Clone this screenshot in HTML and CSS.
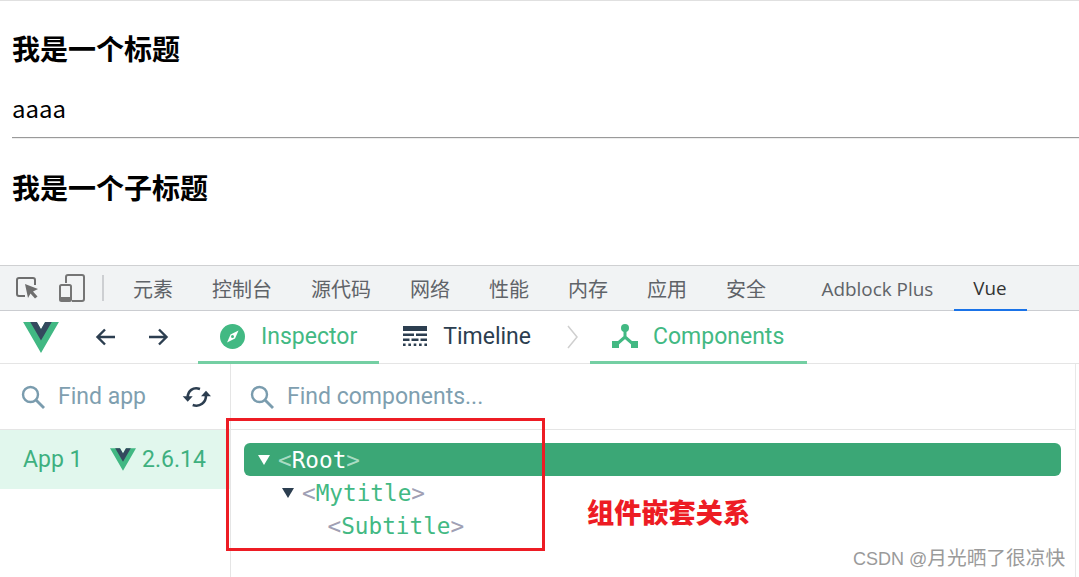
FILE: index.html
```html
<!DOCTYPE html>
<html lang="zh">
<head>
<meta charset="utf-8">
<title>Vue Devtools</title>
<link rel="stylesheet" href="styles.css">
</head>
<body>
<main class="page">
  <h1 class="title">我是一个标题</h1>
  <p class="text">aaaa</p>
  <hr class="rule">
  <h2 class="title sub">我是一个子标题</h2>
</main>
<nav class="dt-bar">
  <svg class="dt-icon inspect" width="24" height="24" viewBox="0 0 24 24"><path d="M9 20H3a2 2 0 0 1-2-2V4a2 2 0 0 1 2-2h14a2 2 0 0 1 2 2v5" fill="none" stroke="#6e6e6e" stroke-width="2"/><path d="M9 8l13 5-5 2.500 4.500 5-2.500 2-4.500-5L12 22z" fill="#6e6e6e"/></svg>
  <svg class="dt-icon device" width="28" height="28" viewBox="0 0 28 28"><path d="M8 9V3a2 2 0 0 1 2-2h14a2 2 0 0 1 2 2v22a2 2 0 0 1-2 2H14" fill="none" stroke="#757575" stroke-width="2"/><rect x="2" y="11" width="11" height="16" rx="1.500" fill="none" stroke="#757575" stroke-width="2"/><rect x="2" y="23" width="11" height="4" fill="#757575"/></svg>
  <span class="dt-sep"></span>
  <div class="dt-tabs">
    <span class="dt-tab">元素</span>
    <span class="dt-tab">控制台</span>
    <span class="dt-tab">源代码</span>
    <span class="dt-tab">网络</span>
    <span class="dt-tab">性能</span>
    <span class="dt-tab">内存</span>
    <span class="dt-tab">应用</span>
    <span class="dt-tab">安全</span>
    <span class="dt-tab ext">Adblock Plus</span>
    <span class="dt-tab vue">Vue</span>
  </div>
</nav>
<header class="vue-bar">
  <svg class="logo" width="36" height="31" viewBox="0 0 261.76 226.69"><path d="M161.096.001l-30.225 52.351L100.647.001H-.005l130.877 226.688L261.749.001z" fill="#41b883"/><path d="M161.096.001l-30.225 52.351L100.647.001H52.346l78.526 136.01L209.398.001z" fill="#34495e"/></svg>
  <svg class="arrow back" width="22" height="22" viewBox="0 0 22 22"><path d="M20 11H3M10 3.500L2.500 11l7.500 7.500" fill="none" stroke="#2c3e50" stroke-width="2.400"/></svg>
  <svg class="arrow fwd" width="22" height="22" viewBox="0 0 22 22"><path d="M1 11h17M11 3.500l7.500 7.500-7.500 7.500" fill="none" stroke="#2c3e50" stroke-width="2.400"/></svg>
  <div class="vue-tab active inspector">
    <svg width="25" height="25" viewBox="0 0 25 25"><circle cx="12.500" cy="12.500" r="12.500" fill="#42b983"/><path d="M18.500 6.500l-8 4-3.500 8 8-4z" fill="#fff"/><circle cx="12.500" cy="12.500" r="1.500" fill="#42b983"/></svg>
    <span>Inspector</span>
  </div>
  <div class="vue-tab timeline">
    <svg width="24" height="20" viewBox="0 0 24 20"><rect x="0" y="0" width="24" height="5" fill="#2c3e50"/><path d="M0 8.700h11M13 8.700h11M0 13.700h6.500M8.500 13.700h7M17.500 13.700h6.500" stroke="#2c3e50" stroke-width="2.400"/><path d="M0 18.700h24" stroke="#2c3e50" stroke-width="2.400" stroke-dasharray="2.600 2.750"/></svg>
    <span>Timeline</span>
  </div>
  <svg class="chev" width="11" height="24" viewBox="0 0 11 24"><path d="M1 1l9 11-9 11" fill="none" stroke="#cfcfcf" stroke-width="1.500"/></svg>
  <div class="vue-tab active components">
    <svg width="26" height="24" viewBox="0 0 26 24"><circle cx="13" cy="4" r="4" fill="#42b983"/><path d="M13 6v8M13 13L5 20M13 13l8 7" stroke="#42b983" stroke-width="3" fill="none"/><rect x="0" y="17" width="7" height="7" fill="#42b983"/><rect x="19" y="17" width="7" height="7" fill="#42b983"/></svg>
    <span>Components</span>
  </div>
</header>
<section class="panes">
  <aside class="apps">
    <div class="search">
      <svg class="glass" width="24" height="24" viewBox="0 0 24 24"><circle cx="9.500" cy="9.500" r="7.500" fill="none" stroke="#7a9cae" stroke-width="2.400"/><path d="M15 15l8 8" stroke="#7a9cae" stroke-width="2.800"/></svg>
      <span class="hint">Find app</span>
      <svg class="sync" width="30" height="22" viewBox="-1 0 30 22"><path d="M17 3C10 .5 4.700 5 4.700 11.500M9.700 19C17 21.500 23 16.500 23 9.500" fill="none" stroke="#2c3e50" stroke-width="2.600"/><path d="M-.3 10.300h10l-5 5.500zM18 10.300h10l-5-5.500z" fill="#2c3e50"/></svg>
    </div>
    <div class="app-row">
      <span class="app-name">App 1</span>
      <svg width="26" height="23" viewBox="0 0 261.76 226.69"><path d="M161.096.001l-30.225 52.351L100.647.001H-.005l130.877 226.688L261.749.001z" fill="#41b883"/><path d="M161.096.001l-30.225 52.351L100.647.001H52.346l78.526 136.01L209.398.001z" fill="#34495e"/></svg>
      <span class="app-ver">2.6.14</span>
    </div>
  </aside>
  <div class="tree-pane">
    <div class="search wide">
      <svg class="glass" width="24" height="24" viewBox="0 0 24 24"><circle cx="9.500" cy="9.500" r="7.500" fill="none" stroke="#7a9cae" stroke-width="2.400"/><path d="M15 15l8 8" stroke="#7a9cae" stroke-width="2.800"/></svg>
      <span class="hint">Find components...</span>
    </div>
    <ul class="tree">
      <li class="node selected"><i class="tri"></i><span class="br">&lt;</span><span class="nm">Root</span><span class="br">&gt;</span></li>
      <li class="node d1"><i class="tri"></i><span class="br">&lt;</span><span class="nm">Mytitle</span><span class="br">&gt;</span></li>
      <li class="node d2"><span class="br">&lt;</span><span class="nm">Subtitle</span><span class="br">&gt;</span></li>
    </ul>
  </div>
</section>
<div class="redbox"></div>
<div class="note">组件嵌套关系</div>
<div class="mark">CSDN @<span class="mark-cjk">月光晒了很凉快</span></div>
</body>
</html>
```
FILE: styles.css
```css
* { box-sizing: border-box; }
html, body { margin: 0; padding: 0; }
body {
  position: relative;
  width: 1079px;
  height: 577px;
  overflow: hidden;
  background: #fff;
  font-family: "Noto Sans CJK SC", "Noto Sans", sans-serif;
}
.page {
  height: 265px;
  padding: 29px 0 0 12px;
  border-top: 1px solid #e0e0e0;
}
.title {
  margin: 0;
  font-size: 28px;
  line-height: 36px;
  font-weight: 700;
  color: #000;
}
.title.sub { margin-top: 30px; }
.text {
  margin: 26px 0 0;
  font-size: 24px;
  line-height: 32px;
  color: #000;
}
.rule {
  margin: 13px 0 0;
  height: 2px;
  border: 0;
  border-top: 1px solid #9a9a9a;
  border-bottom: 1px solid #eee;
}
.dt-bar {
  display: flex;
  align-items: center;
  height: 46px;
  background: #f1f3f4;
  border-top: 1px solid #cfd0d2;
  border-bottom: 1px solid #cbcdd1;
}
.dt-icon { flex: none; }
.inspect { margin-left: 16px; }
.device { margin-left: 18px; }
.dt-sep {
  width: 2px;
  height: 26px;
  margin-left: 16px;
  background: #cdcfd2;
}
.dt-tabs {
  display: flex;
  align-self: stretch;
  margin-left: 9.500px;
}
.dt-tab {
  display: flex;
  align-items: center;
  padding: 0 19.500px;
  font-size: 20px;
  color: #5f6368;
  white-space: nowrap;
}
.dt-tab.ext {
  margin-left: 17px;
  padding: 1px 21px 0 19px;
  font-size: 18.900px;
  font-family: "Open Sans", "Noto Sans", sans-serif;
}
.dt-tab.vue {
  width: 73px;
  padding: 1px 19px 0;
  font-size: 18.800px;
  color: #333;
  font-family: "Open Sans", "Noto Sans", sans-serif;
  border-bottom: 2px solid #1a73e8;
  margin-bottom: -1px;
}
.vue-bar {
  display: flex;
  align-items: center;
  height: 53px;
  border-bottom: 1px solid #e5e5e5;
  font-family: Roboto, sans-serif;
}
.logo { margin-left: 23px; flex: none; }
.arrow { flex: none; }
.back { margin-left: 36px; }
.fwd { margin-left: 31px; }
.vue-tab {
  display: flex;
  align-items: center;
  gap: 16px;
  align-self: stretch;
  padding: 0 22px;
  font-size: 23px;
  color: #2c3e50;
  border-bottom: 3px solid transparent;
  margin-bottom: -1px;
}
.vue-tab.active {
  color: #42b983;
  border-bottom-color: #74cfa3;
}
.inspector { margin-left: 28px; }
.timeline { padding: 0 0 0 24px; }
.components { margin-left: 12px; gap: 15px; padding-right: 23px; }
.chev { margin-left: 36px; flex: none; }
.panes {
  display: flex;
  height: 213px;
  font-family: Roboto, sans-serif;
}
.apps {
  width: 231px;
  flex: none;
  border-right: 1px solid #e5e5e5;
}
.tree-pane {
  width: 845px;
  flex: none;
  border-right: 1px solid #e8e8e8;
}
.search {
  display: flex;
  align-items: center;
  height: 66px;
  padding-left: 21px;
  border-bottom: 1px solid #e5e5e5;
}
.search.wide { padding-left: 19px; }
.hint {
  margin-left: 13px;
  font-size: 23px;
  color: #7f9fb0;
}
.sync { margin-left: 36px; flex: none; }
.app-row {
  display: flex;
  align-items: center;
  height: 59px;
  padding-left: 23px;
  background: #e1f7ed;
  color: #3eb07f;
  font-size: 23px;
}
.app-name { width: 87px; }
.app-ver { margin-left: 6px; }
.tree {
  list-style: none;
  margin: 13px 14px 0 13px;
  padding: 0;
  font-family: "DejaVu Sans Mono", monospace;
  font-size: 22.700px;
}
.node {
  display: flex;
  align-items: center;
  height: 33px;
  color: #42b983;
  white-space: nowrap;
}
.br { color: #a0a0b4; }
.tri {
  width: 0;
  height: 0;
  margin-right: 8px;
  border-left: 6.500px solid transparent;
  border-right: 6.500px solid transparent;
  border-top: 10px solid #2c3e50;
}
.selected {
  padding-left: 14px;
  background: #3ba776;
  border-radius: 6px;
  color: #fff;
}
.selected .tri { border-top-color: #fff; }
.selected .br { color: #a9dcc3; }
.d1 { padding-left: 38px; }
.d2 { padding-left: 83.500px; }
.redbox {
  position: absolute;
  left: 226px;
  top: 418px;
  width: 319px;
  height: 133px;
  border: 3px solid #ed1c24;
}
.note {
  position: absolute;
  left: 587px;
  top: 491px;
  font-size: 27.200px;
  line-height: 40px;
  font-weight: 900;
  color: #ed1c24;
}
.mark {
  position: absolute;
  left: 853px;
  top: 545px;
  font-size: 18px;
  line-height: 26px;
  color: #9a9a9a;
  font-family: "Liberation Sans", "Noto Sans CJK SC", sans-serif;
}
.mark-cjk { font-size: 19.700px; }
```
